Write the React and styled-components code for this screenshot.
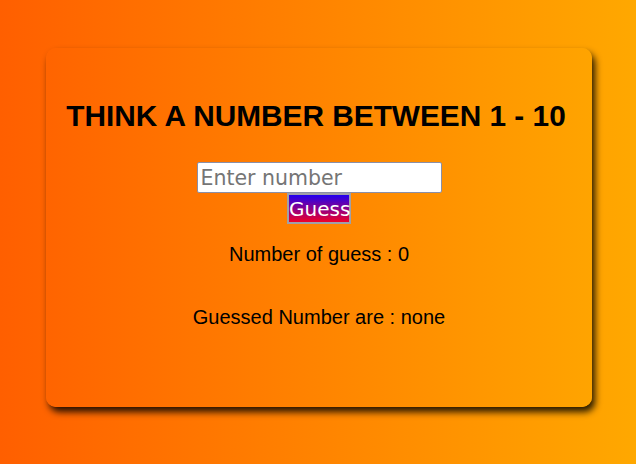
import React, { useState } from "react";
import styled, { createGlobalStyle } from "styled-components";

const GlobalStyle = createGlobalStyle`
  html, body {
    margin: 0;
    padding: 0;
    height: 100%;
  }
  body {
    background: linear-gradient(to right, #ff5f00, #ffa800);
    font-family: "Liberation Sans", Arial, sans-serif;
  }
`;

const Page = styled.div`
  display: flex;
  justify-content: center;
  padding: 48px 0 0 2px;
  height: 464px;
  box-sizing: border-box;
`;

const Card = styled.div`
  width: 546px;
  height: 359px;
  border-radius: 10px;
  background: linear-gradient(to right, #ff6400, #ffa400);
  box-shadow: 3px 5px 7px rgba(0, 0, 0, 0.85);
  display: flex;
  flex-direction: column;
  align-items: center;
  box-sizing: border-box;
  padding-top: 51px;
`;

const Title = styled.h1`
  margin: 0;
  padding-right: 6px;
  font-size: 29.8px;
  font-weight: bold;
  color: #000;
`;

const Form = styled.div`
  display: flex;
  flex-direction: column;
  align-items: center;
  margin-top: 29px;
`;

const Input = styled.input`
  width: 245px;
  height: 31px;
  box-sizing: border-box;
  border: 1px solid #8a8fa8;
  border-radius: 2px;
  padding: 0 3px;
  font-family: "DejaVu Sans", Verdana, sans-serif;
  font-size: 20.5px;
  background: #fff;
  &::placeholder {
    color: #757575;
  }
`;

const Button = styled.button`
  margin-top: 0;
  width: 64px;
  height: 31px;
  box-sizing: border-box;
  border: 2px solid #a0a0a8;
  padding: 0;
  background: linear-gradient(to bottom, #2000f0, #f00028);
  color: #fff;
  font-family: "DejaVu Sans", Verdana, sans-serif;
  font-size: 20px;
`;

const Info = styled.p`
  margin: ${(p) => p.$top}px 0 0;
  font-size: 20px;
  color: #000;
`;

export default function App() {
  const [value, setValue] = useState("");
  const [guesses, setGuesses] = useState([]);

  return (
    <>
      <GlobalStyle />
      <Page>
        <Card>
          <Title>THINK A NUMBER BETWEEN 1 - 10</Title>
          <Form>
            <Input
              type="text"
              placeholder="Enter number"
              value={value}
              onChange={(e) => setValue(e.target.value)}
            />
            <Button
              onClick={() => {
                if (value) setGuesses([...guesses, value]);
                setValue("");
              }}
            >
              Guess
            </Button>
          </Form>
          <Info $top={19}>Number of guess : {guesses.length}</Info>
          <Info $top={40}>
            Guessed Number are : {guesses.length ? guesses.join(", ") : "none"}
          </Info>
        </Card>
      </Page>
    </>
  );
}
